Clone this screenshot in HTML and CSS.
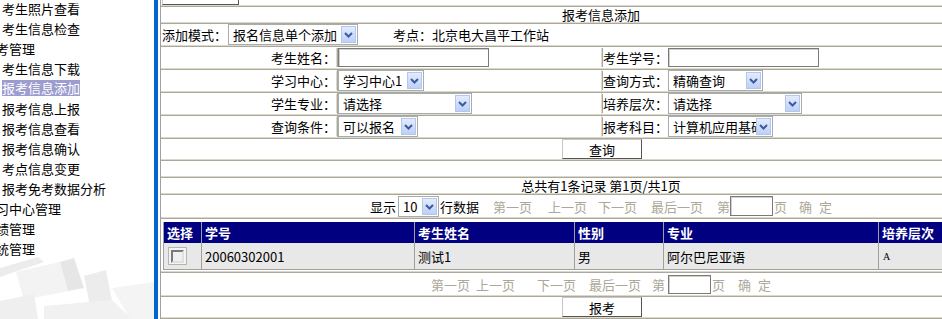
FILE: index.html
```html
<!DOCTYPE html>
<html lang="zh-CN">
<head>
<meta charset="utf-8">
<title>报考信息添加</title>
<link rel="stylesheet" href="styles.css">
</head>
<body>
<div class="page">
  <aside class="side">
    <svg class="kbd" width="154" height="319" viewBox="0 0 154 319">
      <polygon points="0,268 38,257 44,262 0,277" fill="#ececec"/>
      <polygon points="16,272 60,262 68,291 24,300" fill="#f3f3f3"/>
      <polygon points="60,262 74,258 84,288 68,291" fill="#e6e6e6"/>
      <polygon points="84,276 106,270 112,301 90,306" fill="#ececec"/>
      <polygon points="0,301 34,294 38,319 0,319" fill="#efefef"/>
      <polygon points="44,306 112,300 132,319 44,319" fill="#f1f1f1"/>
      <polygon points="112,288 154,282 154,319 130,319" fill="#f4f4f4"/>
    </svg>
    <ul class="menu">
      <li class="sub">考生照片查看</li>
      <li class="sub">考生信息检查</li>
      <li class="top">报考管理</li>
      <li class="sub">考生信息下载</li>
      <li class="sub"><span class="on">报考信息添加</span></li>
      <li class="sub">报考信息上报</li>
      <li class="sub">报考信息查看</li>
      <li class="sub">报考信息确认</li>
      <li class="sub">考点信息变更</li>
      <li class="sub">报考免考数据分析</li>
      <li class="top">学习中心管理</li>
      <li class="top">成绩管理</li>
      <li class="top">系统管理</li>
    </ul>
  </aside>
  <div class="bar"></div>
  <div class="gutter"></div>
  <main class="main">
    <div class="row r-top"><span class="btn btn-cut"></span></div>
    <div class="row r-title">报考信息添加</div>
    <div class="row r-mode">
      <span class="lbl">添加模式：</span>
      <span class="sel w-mode"><span class="val">报名信息单个添加</span><span class="arr"><svg width="9" height="6" viewBox="0 0 9 6"><path d="M1 1 L4.5 4.5 L8 1" fill="none" stroke="#3d5a9c" stroke-width="2"/></svg></span></span>
      <span class="site">考点：北京电大昌平工作站</span>
    </div>
    <div class="row form">
      <div class="c l1">考生姓名：</div>
      <div class="c f1"><span class="inp w-name"></span></div>
      <div class="c l2">考生学号：</div>
      <div class="c f2"><span class="inp w-no"></span></div>
    </div>
    <div class="row form">
      <div class="c l1">学习中心：</div>
      <div class="c f1"><span class="sel w-center"><span class="val">学习中心1</span><span class="arr"><svg width="9" height="6" viewBox="0 0 9 6"><path d="M1 1 L4.5 4.5 L8 1" fill="none" stroke="#3d5a9c" stroke-width="2"/></svg></span></span></div>
      <div class="c l2">查询方式：</div>
      <div class="c f2"><span class="sel w-way"><span class="val">精确查询</span><span class="arr"><svg width="9" height="6" viewBox="0 0 9 6"><path d="M1 1 L4.5 4.5 L8 1" fill="none" stroke="#3d5a9c" stroke-width="2"/></svg></span></span></div>
    </div>
    <div class="row form">
      <div class="c l1">学生专业：</div>
      <div class="c f1"><span class="sel w-major"><span class="val">请选择</span><span class="arr"><svg width="9" height="6" viewBox="0 0 9 6"><path d="M1 1 L4.5 4.5 L8 1" fill="none" stroke="#3d5a9c" stroke-width="2"/></svg></span></span></div>
      <div class="c l2">培养层次：</div>
      <div class="c f2"><span class="sel w-level"><span class="val">请选择</span><span class="arr"><svg width="9" height="6" viewBox="0 0 9 6"><path d="M1 1 L4.5 4.5 L8 1" fill="none" stroke="#3d5a9c" stroke-width="2"/></svg></span></span></div>
    </div>
    <div class="row form">
      <div class="c l1">查询条件：</div>
      <div class="c f1"><span class="sel w-cond"><span class="val">可以报名</span><span class="arr"><svg width="9" height="6" viewBox="0 0 9 6"><path d="M1 1 L4.5 4.5 L8 1" fill="none" stroke="#3d5a9c" stroke-width="2"/></svg></span></span></div>
      <div class="c l2">报考科目：</div>
      <div class="c f2"><span class="sel w-subj"><span class="val">计算机应用基础</span><span class="arr"><svg width="9" height="6" viewBox="0 0 9 6"><path d="M1 1 L4.5 4.5 L8 1" fill="none" stroke="#3d5a9c" stroke-width="2"/></svg></span></span></div>
    </div>
    <div class="row r-btn"><span class="btn">查询</span></div>
    <div class="row r-empty"></div>
    <div class="row r-total">总共有1条记录&nbsp;第1页/共1页</div>
    <div class="row r-pager">
      <span>显示</span>
      <span class="sel w-size"><span class="val">10</span><span class="arr"><svg width="9" height="6" viewBox="0 0 9 6"><path d="M1 1 L4.5 4.5 L8 1" fill="none" stroke="#3d5a9c" stroke-width="2"/></svg></span></span>
      <span class="m1">行数据</span>
      <span class="lk g14">第一页</span>
      <span class="lk g16">上一页</span>
      <span class="lk g11">下一页</span>
      <span class="lk g14">最后一页</span>
      <span class="lk g14">第</span>
      <span class="inp w-page"></span>
      <span class="lk g1">页</span>
      <span class="lk g12">确</span>
      <span class="lk g7">定</span>
    </div>
    <div class="block">
      <div class="dt">
        <div class="h">选择</div>
        <div class="h">学号</div>
        <div class="h">考生姓名</div>
        <div class="h">性别</div>
        <div class="h">专业</div>
        <div class="h">培养层次</div>
        <div class="d"><span class="chk"><span class="chk-in"></span></span></div>
        <div class="d">20060302001</div>
        <div class="d">测试1</div>
        <div class="d">男</div>
        <div class="d">阿尔巴尼亚语</div>
        <div class="d"><span class="small">A</span></div>
      </div>
    </div>
    <div class="row r-pager2">
      <span class="lk">第一页</span>
      <span class="lk g6">上一页</span>
      <span class="lk g22">下一页</span>
      <span class="lk g13">最后一页</span>
      <span class="lk g11">第</span>
      <span class="inp w-page2 g3"></span>
      <span class="lk g1">页</span>
      <span class="lk g13">确</span>
      <span class="lk g7">定</span>
    </div>
    <div class="row r-btn2"><span class="btn">报考</span></div>
    <div class="row r-last"></div>
  </main>
</div>
</body>
</html>
```

FILE: styles.css
```css
html, body {
  margin: 0;
  padding: 0;
  overflow: hidden;
  background: #fff;
}
body {
  font-family: "Noto Sans CJK SC", "Noto Sans", sans-serif;
  font-size: 13px;
  color: #000;
}
.page {
  display: flex;
  width: 942px;
  height: 319px;
  overflow: hidden;
}

/* sidebar */
.side {
  position: relative;
  width: 154px;
  flex: none;
  overflow: hidden;
}
.kbd {
  position: absolute;
  left: 0;
  top: 0;
}
.menu {
  position: relative;
  list-style: none;
  margin: -2px 0 0;
  padding: 0;
}
.menu li {
  height: 20px;
  display: flex;
  align-items: center;
  white-space: nowrap;
}
.menu .sub { padding-left: 2px; }
.menu .top { margin-left: -17px; }
.on {
  display: block;
  height: 16px;
  line-height: 16px;
  background: #9c9cce;
  color: #fff;
}
.bar {
  width: 4px;
  flex: none;
  background: #0066cc;
}
.gutter {
  width: 2px;
  flex: none;
}

/* main frame */
.main {
  flex: none;
  width: 880px;
  border-left: 1px solid #a0a0a0;
}
.row {
  border-top: 1px solid #aca899;
  border-bottom: 1px solid #dcd9cb;
  display: flex;
  align-items: center;
}
.r-top {
  height: 5px;
  border-top: 0;
  align-items: flex-start;
  overflow: hidden;
}
.btn {
  display: flex;
  align-items: center;
  justify-content: center;
  box-sizing: border-box;
  width: 80px;
  height: 20px;
  background: #fff;
  border: 1px solid;
  border-color: #c8c8c8 #555 #555 #c8c8c8;
}
.btn-cut {
  width: 77px;
  margin-top: -15px;
  margin-left: 1px;
}
.r-title {
  height: 15px;
  justify-content: center;
}
.r-mode { height: 21px; }
.lbl { margin-left: 1px; }
.site { margin-left: 35px; }

.form {
  display: grid;
  grid-template-columns: 176px 265px 66px 1fr;
  height: 21px;
}
.c {
  display: flex;
  align-items: center;
  white-space: nowrap;
}
.l1 {
  justify-content: flex-end;
  border-right: 1px solid #dcd9cb;
}
.f1 {
  border-left: 1px solid #aca899;
  border-right: 1px solid #dcd9cb;
}
.l2 {
  border-left: 1px solid #aca899;
}

/* select imitation */
.sel {
  display: flex;
  box-sizing: border-box;
  height: 21px;
  border: 1px solid #a5acb2;
  padding: 1px;
  background: #fff;
  flex: none;
}
.sel .val {
  flex: 1;
  min-width: 0;
  overflow: hidden;
  white-space: nowrap;
  padding-left: 3px;
  line-height: 17px;
}
.sel .arr {
  flex: none;
  box-sizing: border-box;
  width: 15px;
  height: 17px;
  border: 1px solid #b3c6ee;
  background: linear-gradient(#e4ecfd, #bdd0f8);
  display: flex;
  align-items: center;
  justify-content: center;
  padding-top: 1px;
}
.w-mode { width: 130px; margin-left: 1px; }
.w-center { width: 86px; }
.w-way { width: 95px; }
.w-major { width: 134px; }
.w-level { width: 134px; }
.w-cond { width: 80px; }
.w-subj { width: 105px; }
.w-size { width: 41px; margin-left: 2px; }

.inp {
  display: block;
  box-sizing: border-box;
  height: 19px;
  border: 1px solid #7a7a7a;
  box-shadow: inset 1px 1px 0 #d0d0d0;
  background: #fff;
  flex: none;
}
.w-name { width: 151px; }
.w-no { width: 151px; }
.w-page { width: 43px; height: 20px; }
.w-page2 { width: 43px; }

.r-btn { height: 20px; justify-content: center; }
.r-btn .btn { margin-left: 2px; }
.r-empty { height: 15px; }
.r-total { height: 15px; justify-content: center; }
.r-pager { height: 22px; justify-content: center; }
.r-pager2 { height: 22px; justify-content: center; }
.r-btn2 { height: 20px; justify-content: center; }
.r-btn2 .btn { margin-left: 2px; }
.r-last { height: 4px; border-bottom: 0; }

.lk { color: #aca899; white-space: nowrap; }
.m1 { margin-left: 1px; }
.g1 { margin-left: 1px; }
.g3 { margin-left: 3px; }
.g6 { margin-left: 6px; }
.g7 { margin-left: 7px; }
.g11 { margin-left: 11px; }
.g12 { margin-left: 12px; }
.g13 { margin-left: 13px; }
.g14 { margin-left: 14px; }
.g16 { margin-left: 16px; }
.g22 { margin-left: 22px; }

/* data table */
.block {
  border-top: 1px solid #aca899;
  border-bottom: 1px solid #dcd9cb;
  padding: 3px 0 1px 2px;
}
.dt {
  display: grid;
  grid-template-columns: 38px 213px 160px 89px 215px 161px;
}
.dt .h {
  height: 21px;
  background: #000080;
  color: #fff;
  font-weight: bold;
  border-left: 1px solid #a0a0a0;
  padding-left: 3px;
  display: flex;
  align-items: center;
  white-space: nowrap;
}
.dt .d {
  height: 26px;
  background: #e8e8e8;
  border-left: 1px solid #a0a0a0;
  border-bottom: 1px solid #a0a0a0;
  padding-left: 3px;
  display: flex;
  align-items: center;
  white-space: nowrap;
}
.chk {
  display: flex;
  align-items: center;
  justify-content: center;
  box-sizing: border-box;
  width: 19px;
  height: 18px;
  margin-left: 1px;
  border: 1px solid #b4b4b4;
  background: #f4f4f4;
}
.chk-in {
  display: block;
  box-sizing: border-box;
  width: 13px;
  height: 13px;
  border: 2px solid;
  border-color: #7a7a7a #e0e0e0 #e0e0e0 #7a7a7a;
  background: #f0f0f0;
}
.small {
  font-family: "Liberation Serif", serif;
  font-size: 10px;
  margin-left: 1px;
}
```
